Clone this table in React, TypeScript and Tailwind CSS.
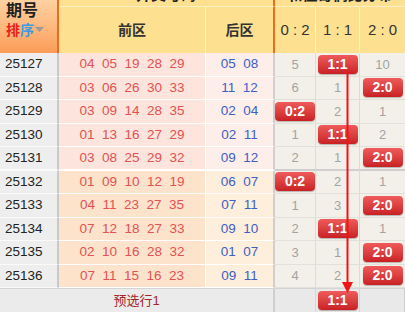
import React from 'react';

type Ratio = '0:2' | '1:1' | '2:0';

interface Draw {
  issue: string;
  front: string[];
  back: string[];
  counts: [number, number, number];
  hit: Ratio;
}

const draws: Draw[] = [
  { issue: '25127', front: ['04', '05', '19', '28', '29'], back: ['05', '08'], counts: [5, 1, 10], hit: '1:1' },
  { issue: '25128', front: ['03', '06', '26', '30', '33'], back: ['11', '12'], counts: [6, 1, 1], hit: '2:0' },
  { issue: '25129', front: ['03', '09', '14', '28', '35'], back: ['02', '04'], counts: [1, 2, 1], hit: '0:2' },
  { issue: '25130', front: ['01', '13', '16', '27', '29'], back: ['02', '11'], counts: [1, 1, 2], hit: '1:1' },
  { issue: '25131', front: ['03', '08', '25', '29', '32'], back: ['09', '12'], counts: [2, 1, 1], hit: '2:0' },
  { issue: '25132', front: ['01', '09', '10', '12', '19'], back: ['06', '07'], counts: [1, 2, 1], hit: '0:2' },
  { issue: '25133', front: ['04', '11', '23', '27', '35'], back: ['07', '11'], counts: [1, 3, 1], hit: '2:0' },
  { issue: '25134', front: ['07', '12', '18', '27', '33'], back: ['09', '10'], counts: [2, 1, 1], hit: '1:1' },
  { issue: '25135', front: ['02', '10', '16', '28', '32'], back: ['01', '07'], counts: [3, 1, 1], hit: '2:0' },
  { issue: '25136', front: ['07', '11', '15', '16', '23'], back: ['09', '11'], counts: [4, 2, 1], hit: '2:0' },
];

const ratios: Ratio[] = ['0:2', '1:1', '2:0'];

const cols = 'grid grid-cols-[59px_147px_69px_41px_44px_45px]';
const num = "font-['Liberation_Sans',Arial,sans-serif]";
const cjk = "font-['Liberation_Sans','Noto_Sans_CJK_SC',sans-serif]";

const Badge: React.FC<{ label: string }> = ({ label }) => (
  <div
    className={`flex h-[19px] w-[40px] items-center justify-center rounded-[4px] bg-gradient-to-b from-[#ef5a5a] to-[#c91f24] text-[14px] font-bold text-white shadow-[0_1px_1px_rgba(0,0,0,0.25)] ${num}`}
  >
    {label}
  </div>
);

const Header: React.FC = () => (
  <div className={`${cols} grid-rows-[22px_46px] bg-[#fee190]`}>
    <div className="row-span-2 flex flex-col items-start border-r-2 border-[#ee6a1c] bg-gradient-to-b from-[#fde1b4] to-[#fc9c58] pl-[6px] pt-[17px]">
      <div className={`text-[16px] font-bold leading-[18px] text-[#222] ${cjk}`}>期号</div>
      <div className={`flex items-center text-[14px] font-bold leading-[20px] ${cjk}`}>
        <span className="text-[#e4231b]">排</span>
        <span className="text-[#3b9be3]">序</span>
        <svg width="9" height="6" viewBox="0 0 9 6" className="ml-[1px]">
          <polygon points="0,0 9,0 4.5,5" fill="#9a9a9a" />
        </svg>
      </div>
    </div>
    <div className={`col-span-2 flex items-center justify-center border-r-2 border-b border-r-[#ee6a1c] border-b-[#fff0c0] text-[15px] font-bold text-[#222] ${cjk}`}>
      开奖号码
    </div>
    <div className={`col-span-3 flex items-center justify-center border-b border-[#fff0c0] text-[15px] font-bold text-[#222] ${cjk}`}>
      和值奇偶比分布
    </div>
    <div className={`flex items-center justify-center border-r border-[#fff4d0] text-[14px] font-bold text-[#333] ${cjk}`}>前区</div>
    <div className={`flex items-center justify-center border-r-2 border-[#ee6a1c] text-[14px] font-bold text-[#333] ${cjk}`}>后区</div>
    {ratios.map((r, i) => (
      <div
        key={r}
        className={`flex items-center justify-center text-[15px] text-[#333] ${num} ${i < 2 ? 'border-r border-[#fff4d0]' : ''}`}
      >
        {r.replace(':', ' : ')}
      </div>
    ))}
  </div>
);

const Row: React.FC<{ draw: Draw; index: number }> = ({ draw, index }) => {
  const second = index >= 5;
  const edge = index === 4 ? 'border-b-2' : 'border-b';
  return (
    <div className={`${cols} h-[23.5px]`}>
      <div className={`flex items-center border-r-2 border-r-[#c9c9c9] ${edge} border-b-[#fafafa] bg-[#eeeeee] pl-[5px] text-[13.5px] text-[#222] ${num}`}>
        {draw.issue}
      </div>
      <div
        className={`flex items-center justify-center gap-[7.5px] border-r border-r-white ${edge} border-b-white text-[13.5px] text-[#e25252] ${num} ${second ? 'bg-[#fde3cc]' : 'bg-[#fde4dc]'}`}
      >
        {draw.front.map((n, i) => (
          <span key={i}>{n}</span>
        ))}
      </div>
      <div
        className={`flex items-center justify-center gap-[7.5px] border-r-2 border-r-[#cfcfcf] ${edge} border-b-white text-[13.5px] text-[#3e5fc4] ${num} ${second ? 'bg-[#feeedc]' : 'bg-[#fdeeea]'}`}
      >
        {draw.back.map((n, i) => (
          <span key={i}>{n}</span>
        ))}
      </div>
      {ratios.map((r, i) => (
        <div
          key={r}
          className={`flex items-center justify-center ${edge} ${index === 4 ? 'border-b-[#cfcfcf]' : 'border-b-[#e2e0da]'} bg-[#f3f0e9] text-[13px] text-[#a3a3a3] ${num} ${i < 2 ? 'border-r border-r-[#dedbd4]' : ''}`}
        >
          {draw.hit === r ? <Badge label={r} /> : draw.counts[i]}
        </div>
      ))}
    </div>
  );
};

export default function App() {
  return (
    <div className="relative h-[318px] w-[405px] overflow-hidden bg-white">
      <div className="-mt-[15px]">
        <Header />
        {draws.map((d, i) => (
          <Row key={d.issue} draw={d} index={i} />
        ))}
        <div className={`${cols} h-[24px] border-t border-[#d4d4d4]`}>
          <div className={`col-span-3 flex items-center justify-center border-r-2 border-[#cfcfcf] bg-[#ebebeb] text-[13px] text-[#a3262b] ${cjk}`}>
            预选行1
          </div>
          <div className="border-r border-[#d6d6d6] bg-[#e9e9e9]" />
          <div className="flex items-center justify-center border-r border-[#d6d6d6] bg-[#e9e9e9]">
            <Badge label="1:1" />
          </div>
          <div className="border-r border-[#cfcfcf] bg-[#e9e9e9]" />
        </div>
      </div>
      <svg className="pointer-events-none absolute left-[340px] top-[71px]" width="16" height="224" viewBox="0 0 16 224">
        <line x1="7.5" y1="0" x2="7.5" y2="212" stroke="#f01414" strokeWidth="2" />
        <polygon points="2,211 13,211 7.5,222" fill="#f01414" />
      </svg>
    </div>
  );
}
